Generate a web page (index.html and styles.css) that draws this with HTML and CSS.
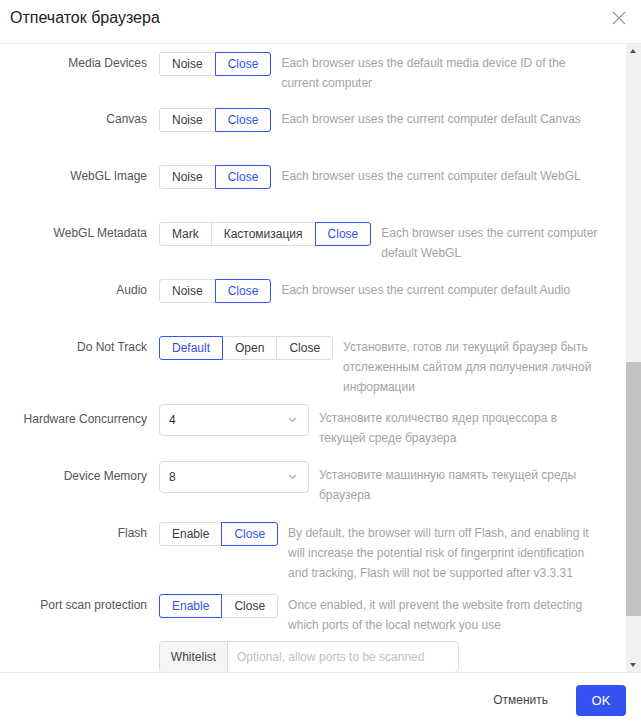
FILE: index.html
```html
<!DOCTYPE html>
<html lang="ru">
<head>
    <meta charset="UTF-8">
    <meta name="viewport" content="width=device-width, initial-scale=1.0">
    <title>Отпечаток браузера</title>
    <link rel="stylesheet" href="styles.css">
</head>
<body>
    <div class="modal">
        <div class="modal-header">
            <span class="modal-title">Отпечаток браузера</span>
            <svg class="modal-close" width="14" height="14" viewBox="0 0 14 14">
                <path d="M1 1L13 13M13 1L1 13" stroke="#9a9a9a" stroke-width="1.2" fill="none"/>
            </svg>
        </div>

        <div class="modal-body">
            <div class="form">
                <div class="form-row row-first">
                    <div class="form-label">Media Devices</div>
                    <div class="btn-group">
                        <span class="btn">Noise</span>
                        <span class="btn active">Close</span>
                    </div>
                    <div class="form-desc">Each browser uses the default media device ID of the current computer</div>
                </div>

                <div class="form-row">
                    <div class="form-label">Canvas</div>
                    <div class="btn-group">
                        <span class="btn">Noise</span>
                        <span class="btn active">Close</span>
                    </div>
                    <div class="form-desc">Each browser uses the current computer default Canvas</div>
                </div>

                <div class="form-row">
                    <div class="form-label">WebGL Image</div>
                    <div class="btn-group">
                        <span class="btn">Noise</span>
                        <span class="btn active">Close</span>
                    </div>
                    <div class="form-desc">Each browser uses the current computer default WebGL</div>
                </div>

                <div class="form-row">
                    <div class="form-label">WebGL Metadata</div>
                    <div class="btn-group">
                        <span class="btn">Mark</span>
                        <span class="btn">Кастомизация</span>
                        <span class="btn active">Close</span>
                    </div>
                    <div class="form-desc">Each browser uses the current computer default WebGL</div>
                </div>

                <div class="form-row">
                    <div class="form-label">Audio</div>
                    <div class="btn-group">
                        <span class="btn">Noise</span>
                        <span class="btn active">Close</span>
                    </div>
                    <div class="form-desc">Each browser uses the current computer default Audio</div>
                </div>

                <div class="form-row">
                    <div class="form-label">Do Not Track</div>
                    <div class="btn-group">
                        <span class="btn active">Default</span>
                        <span class="btn">Open</span>
                        <span class="btn">Close</span>
                    </div>
                    <div class="form-desc">Установите, готов ли текущий браузер быть отслеженным сайтом для получения личной информации</div>
                </div>

                <div class="form-row">
                    <div class="form-label label-select">Hardware Concurrency</div>
                    <div class="select">
                        <span>4</span>
                        <svg width="9" height="6" viewBox="0 0 9 6"><path d="M1 1L4.5 4.5L8 1" stroke="#aaa" stroke-width="1.1" fill="none"/></svg>
                    </div>
                    <div class="form-desc desc-select">Установите количество ядер процессора в текущей среде браузера</div>
                </div>

                <div class="form-row row-memory">
                    <div class="form-label label-select">Device Memory</div>
                    <div class="select">
                        <span>8</span>
                        <svg width="9" height="6" viewBox="0 0 9 6"><path d="M1 1L4.5 4.5L8 1" stroke="#aaa" stroke-width="1.1" fill="none"/></svg>
                    </div>
                    <div class="form-desc desc-select">Установите машинную память текущей среды браузера</div>
                </div>

                <div class="form-row row-flash">
                    <div class="form-label">Flash</div>
                    <div class="btn-group">
                        <span class="btn">Enable</span>
                        <span class="btn active">Close</span>
                    </div>
                    <div class="form-desc">By default, the browser will turn off Flash, and enabling it will increase the potential risk of fingerprint identification and tracking, Flash will not be supported after v3.3.31</div>
                </div>

                <div class="form-row">
                    <div class="form-label">Port scan protection</div>
                    <div class="form-control">
                        <div class="control-line">
                            <div class="btn-group">
                                <span class="btn active">Enable</span>
                                <span class="btn">Close</span>
                            </div>
                            <div class="form-desc">Once enabled, it will prevent the website from detecting which ports of the local network you use</div>
                        </div>
                        <div class="input-group">
                            <span class="input-addon">Whitelist</span>
                            <span class="input-placeholder">Optional, allow ports to be scanned</span>
                        </div>
                    </div>
                </div>
            </div>

            <div class="scrollbar">
                <div class="scroll-arrow up"></div>
                <div class="scroll-track">
                    <div class="scroll-thumb"></div>
                </div>
                <div class="scroll-arrow down"></div>
            </div>
        </div>

        <div class="modal-footer">
            <span class="btn-text">Отменить</span>
            <span class="btn-primary">OK</span>
        </div>
    </div>
</body>
</html>
```

FILE: styles.css
```css
body {
    margin: 0;
    font-family: "Liberation Sans", Arial, sans-serif;
    font-size: 12px;
    color: #333;
    background: #fff;
}
.modal {
    width: 641px;
    height: 724px;
    display: flex;
    flex-direction: column;
}
.modal-header {
    height: 44px;
    box-sizing: border-box;
    padding: 0 15px 7px 10px;
    display: flex;
    align-items: center;
    justify-content: space-between;
    border-bottom: 1px solid #e8e8e8;
}
.modal-title {
    font-size: 16px;
    color: #222;
}
.modal-close {
    display: block;
}
.modal-body {
    height: 628px;
    display: flex;
    overflow: hidden;
}
.form {
    flex: 1;
    padding: 8px 24px 0 0;
}
.form-row {
    display: flex;
    align-items: flex-start;
    min-height: 57px;
    padding-bottom: 7px;
    box-sizing: border-box;
}
.form-row.row-first {
    min-height: 56px;
}
.form-row.row-memory {
    min-height: 61px;
}
.form-row.row-flash {
    padding-bottom: 11px;
}
.form-label {
    width: 147px;
    padding-right: 12px;
    text-align: right;
    line-height: 22px;
    color: #555;
    flex-shrink: 0;
}
.form-label.label-select {
    line-height: 30px;
}
.btn-group {
    display: flex;
    flex-shrink: 0;
}
.btn {
    height: 24px;
    line-height: 22px;
    padding: 0 12px;
    border: 1px solid #dcdcdc;
    box-sizing: border-box;
    color: #3a3a3a;
    background: #fff;
    margin-left: -1px;
    position: relative;
}
.btn:first-child {
    margin-left: 0;
    border-radius: 3px 0 0 3px;
}
.btn:last-child {
    border-radius: 0 3px 3px 0;
}
.btn.active {
    border-color: #3452ef;
    color: #3452ef;
    z-index: 1;
}
.form-desc {
    flex: 1;
    margin: 1px 0 0 10px;
    line-height: 20px;
    color: #a3a3a3;
}
.form-desc.desc-select {
    margin-top: 4px;
}
.select {
    width: 150px;
    height: 32px;
    box-sizing: border-box;
    border: 1px solid #dcdcdc;
    border-radius: 4px;
    padding: 0 11px 0 9px;
    display: flex;
    align-items: center;
    justify-content: space-between;
    flex-shrink: 0;
    color: #333;
}
.form-control {
    flex: 1;
}
.control-line {
    display: flex;
    align-items: flex-start;
}
.input-group {
    display: flex;
    width: 300px;
    height: 32px;
    margin-top: 6px;
    border: 1px solid #dcdcdc;
    border-radius: 4px;
    box-sizing: border-box;
    overflow: hidden;
}
.input-addon {
    width: 67px;
    line-height: 30px;
    text-align: center;
    background: #f5f5f5;
    border-right: 1px solid #dcdcdc;
    color: #444;
}
.input-placeholder {
    line-height: 30px;
    padding-left: 9px;
    color: #c0c0c0;
}
.scrollbar {
    width: 15px;
    background: #f1f1f1;
    display: flex;
    flex-direction: column;
}
.scroll-arrow {
    height: 15px;
    position: relative;
}
.scroll-arrow::after {
    content: "";
    position: absolute;
    left: 4px;
    border-left: 3.5px solid transparent;
    border-right: 3.5px solid transparent;
}
.scroll-arrow.up::after {
    top: 5px;
    border-bottom: 4px solid #505050;
}
.scroll-arrow.down::after {
    top: 6px;
    border-top: 4px solid #505050;
}
.scroll-track {
    flex: 1;
    padding-top: 303px;
}
.scroll-thumb {
    height: 254px;
    background: #c1c1c1;
}
.modal-footer {
    flex: 1;
    border-top: 1px solid #e8e8e8;
    display: flex;
    justify-content: flex-end;
    align-items: flex-start;
    padding: 12px 15px 0 0;
}
.btn-text {
    height: 31px;
    line-height: 31px;
    padding: 0 28px 0 20px;
    font-size: 12px;
    color: #444;
}
.btn-primary {
    width: 50px;
    height: 31px;
    line-height: 31px;
    text-align: center;
    border-radius: 4px;
    background: #3452ef;
    color: #fff;
    font-size: 13px;
}
```
